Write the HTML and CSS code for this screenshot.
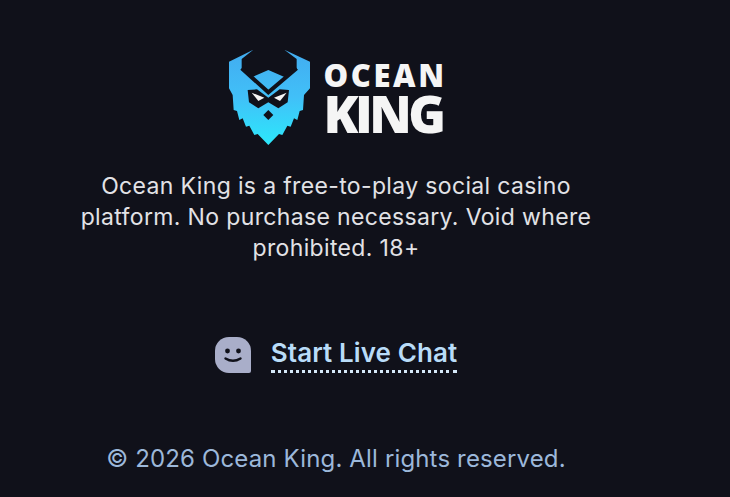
FILE: index.html
```html
<!DOCTYPE html>
<html lang="en">
<head>
<meta charset="utf-8">
<title>Ocean King</title>
<link rel="stylesheet" href="styles.css">
</head>
<body>
<main class="page">
  <div class="brand">
    <svg class="brand-mark" viewBox="0 0 270 315" aria-hidden="true">
      <defs>
        <linearGradient id="sh" x1="0" y1="0" x2="0" y2="1">
          <stop offset="0" stop-color="#42acf0"/>
          <stop offset="0.5" stop-color="#41c0f8"/>
          <stop offset="1" stop-color="#2ce8fb"/>
        </linearGradient>
      </defs>
      <polygon fill="url(#sh)" points="12,50 85,14 50,42 50,75 80,97 130,75 180,97 215,75 215,42 178,14 255,50 255,130 237,150 234,195 224,198 217,225 207,220 197,245 187,242 172,270 162,267 130,300 98,267 88,270 73,242 63,245 53,220 43,225 36,198 26,195 23,150 12,130"/>
      <polyline fill="none" stroke="#10111a" stroke-width="12" points="50,70 130,142 215,70"/>
      <polygon fill="#10111a" points="68,135 96,133 130,158 164,133 192,135 188,172 160,190 130,172 100,190 72,172"/>
      <polygon fill="#f4f4f4" points="80,143 118,158 100,168"/>
      <polygon fill="#f4f4f4" points="185,143 147,158 165,168"/>
      <polygon fill="#10111a" points="130,195 145,210 130,225 115,210"/>
    </svg>
    <div class="brand-name">
      <span class="brand-top">OCEAN</span>
      <span class="brand-bottom">KING</span>
    </div>
  </div>
  <p class="notice">Ocean King is a free-to-play social casino<br>platform. No purchase necessary. Void where<br>prohibited. 18+</p>
  <div class="chat">
    <svg class="chat-icon" viewBox="0 0 36 36" aria-hidden="true">
      <path fill="#a9aec9" d="M14 0h8a14 14 0 0 1 14 14v20a2 2 0 0 1-2 2H14A14 14 0 0 1 0 22v-8A14 14 0 0 1 14 0z"/>
      <circle cx="12.5" cy="14" r="2.4" fill="#10111a"/>
      <circle cx="23.5" cy="14" r="2.4" fill="#10111a"/>
      <path fill="none" stroke="#10111a" stroke-width="2.4" stroke-linecap="round" d="M10.5 21.5c4.500 2.800 10.500 2.800 15 0"/>
    </svg>
    <a class="chat-link" href="#">Start Live Chat</a>
  </div>
  <p class="copyright">© 2026 Ocean King. All rights reserved.</p>
</main>
</body>
</html>
```
FILE: styles.css
```css
html, body {
  margin: 0;
  padding: 0;
  height: 100%;
  background: #10111a;
  overflow: hidden;
}
body {
  font-family: "Inter", "Open Sans", sans-serif;
}
.page {
  width: 672px;
  display: flex;
  flex-direction: column;
  align-items: center;
  padding-top: 45px;
}
.brand {
  display: flex;
  align-items: flex-start;
  gap: 8px;
  height: 105px;
}
.brand-mark {
  width: 90px;
  height: 105px;
  display: block;
}
.brand-name {
  display: flex;
  flex-direction: column;
  font-family: "Open Sans", sans-serif;
  font-weight: 800;
  color: #f5f5f5;
  padding-top: 15px;
}
.brand-top {
  font-size: 31px;
  line-height: 31px;
  letter-spacing: 2.600px;
}
.brand-bottom {
  font-size: 51px;
  line-height: 44px;
  letter-spacing: -3.500px;
}
.notice {
  margin: 21px 0 0;
  font-size: 23px;
  line-height: 31px;
  letter-spacing: 0.35px;
  color: #e2e2e6;
  text-align: center;
}
.chat {
  display: flex;
  align-items: center;
  gap: 20px;
  margin-top: 72px;
}
.chat-icon {
  width: 36px;
  height: 36px;
  display: block;
}
.chat-link {
  font-size: 26px;
  font-weight: 600;
  line-height: 34px;
  letter-spacing: 0.1px;
  color: #b9dcf8;
  text-decoration: none;
  border-bottom: 3px dotted #d5e8f8;
}
.copyright {
  margin: 70px 0 0;
  font-size: 24px;
  line-height: 32px;
  letter-spacing: 0.15px;
  color: #9cb8da;
  text-align: center;
}
```
